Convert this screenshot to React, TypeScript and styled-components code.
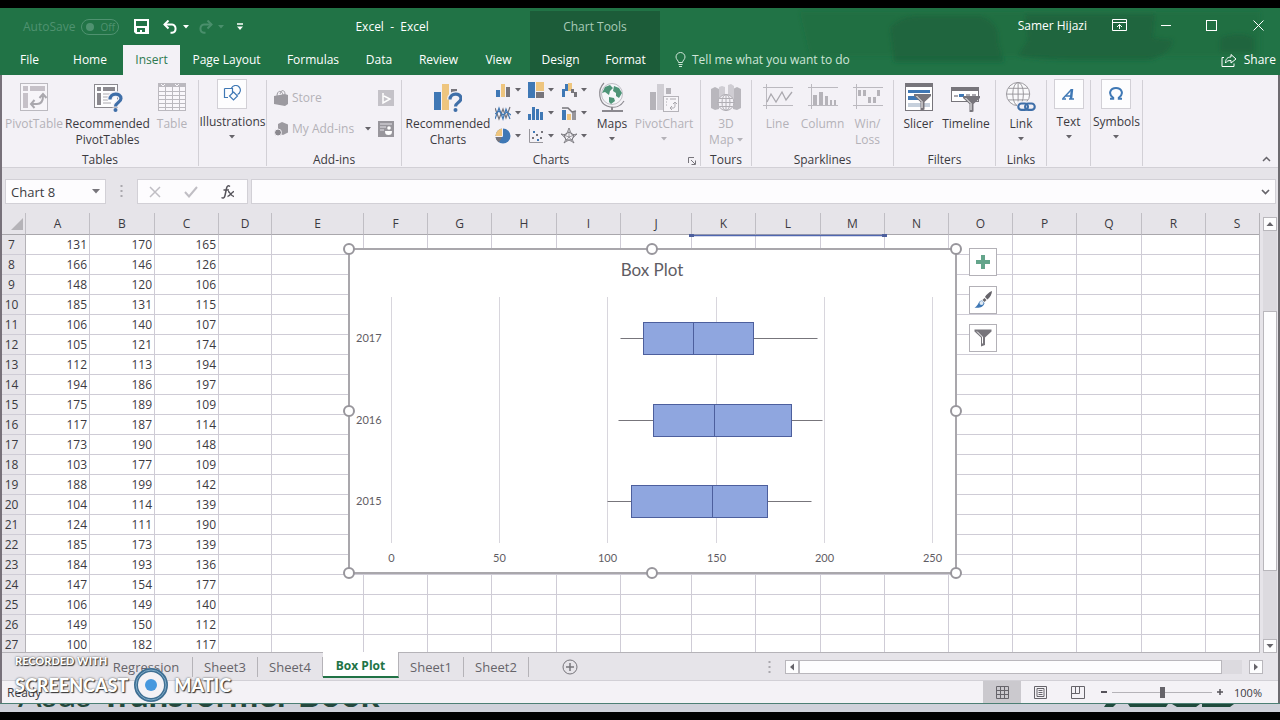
import React from "react";
import styled, { createGlobalStyle, css } from "styled-components";

const ui = `"Open Sans", "Noto Sans", sans-serif`;
const sheetFont = `Lato, "Open Sans", sans-serif`;

const color = {
  green: "#217346",
  greenDark: "#1c5c39",
  ribbon: "#f3f1f6",
  chrome: "#e6e4e9",
  line: "#d2d0d6",
  grid: "#cfccd6",
  text: "#3b3a3f",
  muted: "#b4b2b8",
  blue: "#3f78b5",
  sand: "#eec57e",
  grey: "#77757b",
};

const GlobalStyle = createGlobalStyle`
  * { box-sizing: border-box; }
  body { margin: 0; background: #000; font-family: ${ui}; font-size: 12px; color: ${color.text}; overflow: hidden; }
  button, input { font: inherit; color: inherit; margin: 0; }
  button { background: none; border: 0; padding: 0; cursor: pointer; }
  svg { display: block; flex: none; }
`;

const Screen = styled.div`
  position: relative;
  display: flex;
  flex-direction: column;
  height: 100vh;
  min-height: 420px;
  padding: 8px 0;
  background: #000;
`;

const Window = styled.main`
  flex: 1;
  min-height: 0;
  display: flex;
  flex-direction: column;
  border-left: 2px solid #77717a;
  border-right: 2px solid #6d6b70;
  background: ${color.chrome};
`;

/* Title bar and tabs */

const Header = styled.header`
  position: relative;
  display: flex;
  height: 67px;
  margin: 0 -2px;
  padding: 0 2px;
  background: ${color.green};
  color: #fff;
`;

const Doodles = styled.svg`
  position: absolute;
  right: 0;
  top: 0;
`;

const HeaderSide = styled.div<{ $grow?: boolean }>`
  position: relative;
  display: flex;
  flex-direction: column;
  flex: ${(p) => (p.$grow ? "1" : "0 0 528px")};
`;

const TitleRow = styled.div<{ $end?: boolean }>`
  display: flex;
  align-items: center;
  height: 37px;
  ${(p) => (p.$end ? "justify-content: flex-end; padding: 0 14px 3px 0;" : "padding-left: 21px;")}
`;

const AutoSave = styled.label`
  display: flex;
  align-items: center;
  gap: 6px;
  margin-right: 15px;
  color: #4f9270;
`;

const ToggleInput = styled.input`
  appearance: none;
  width: 8px;
  height: 8px;
  border-radius: 50%;
  background: #4f9270;
`;

const Toggle = styled.span`
  display: flex;
  align-items: center;
  gap: 6px;
  width: 38px;
  height: 16px;
  padding-left: 4px;
  border: 1px solid #4f9270;
  border-radius: 8px;
  font-size: 10px;
`;

const IconButton = styled.button<{ $gap?: number }>`
  display: flex;
  align-items: center;
  justify-content: center;
  margin-right: ${(p) => p.$gap ?? 0}px;
`;

const DocTitle = styled.h1`
  margin: 0 0 0 112px;
  font-size: 12px;
  font-weight: 400;
  white-space: pre;
`;

const TabRow = styled.nav`
  display: flex;
  height: 30px;
`;

const Tab = styled.button<{ $width: number; $active?: boolean }>`
  flex: 0 0 ${(p) => p.$width}px;
  padding-bottom: 1px;
  white-space: nowrap;
  ${(p) => p.$active && css`background: ${color.ribbon}; color: #2d7a50;`}
`;

const ChartTools = styled.div`
  position: relative;
  display: flex;
  flex-direction: column;
  flex: 0 0 130px;
  margin-top: 3px;
  background: ${color.greenDark};
`;

const ChartToolsTitle = styled.div`
  height: 34px;
  line-height: 32px;
  text-align: center;
  color: #a9cbb8;
`;

const TellMe = styled.button`
  display: flex;
  align-items: center;
  gap: 6px;
  margin-left: 15px;
  padding-bottom: 1px;
  color: #cfe5d8;
`;

const Share = styled.button`
  display: flex;
  align-items: center;
  gap: 7px;
  margin-left: auto;
  padding: 0 2px 1px 0;
`;

const UserName = styled.span`
  margin-right: 25px;
`;

/* Ribbon */

const Ribbon = styled.section`
  display: flex;
  height: 93px;
  padding: 5px 0 1px;
  background: ${color.ribbon};
  border-bottom: 1px solid ${color.line};
`;

const Group = styled.div<{ $width: number }>`
  display: flex;
  flex-direction: column;
  justify-content: space-between;
  flex: 0 0 ${(p) => p.$width}px;
  border-right: 1px solid ${color.line};
`;

const GroupBody = styled.div<{ $start?: boolean }>`
  display: flex;
  justify-content: ${(p) => (p.$start ? "flex-start" : "center")};
  padding-left: ${(p) => (p.$start ? "2px" : "0")};
`;

const GroupLabel = styled.div`
  display: flex;
  justify-content: center;
  line-height: 12px;
`;

const Launcher = styled.button`
  margin: 2px 4px 0 -12px;
`;

const LabelText = styled.span`
  flex: 1;
  text-align: center;
`;

const BigButton = styled.button<{ $width: number; $disabled?: boolean }>`
  display: flex;
  flex-direction: column;
  align-items: center;
  flex: 0 0 ${(p) => p.$width}px;
  padding-top: 2px;
  line-height: 16px;
  white-space: nowrap;
  color: ${(p) => (p.$disabled ? color.muted : color.text)};

  > svg:first-child { margin-bottom: 4px; }
`;

const CaretRow = styled.span`
  display: flex;
  height: 14px;
  align-items: center;
`;

const WithCaret = styled.span`
  display: flex;
  align-items: center;
  gap: 3px;
`;

const BoxButton = styled.button`
  display: flex;
  flex-direction: column;
  align-items: center;
  line-height: 16px;
`;

const IconBox = styled.span`
  display: flex;
  align-items: center;
  justify-content: center;
  width: 30px;
  height: 30px;
  margin: -1px 0 5px;
  border: 1px solid ${color.line};
  background: #fdfdfe;
`;

const AddIns = styled.div`
  display: grid;
  grid-template-columns: 104px 16px;
  grid-auto-rows: 31px;
  align-items: center;
  padding-top: 2px;
`;

const SmallButton = styled.button`
  display: flex;
  align-items: center;
  gap: 3px;
  color: ${color.muted};
`;

const ChartGrid = styled.div`
  display: grid;
  grid-template-columns: repeat(3, 33px);
  grid-auto-rows: 23px;
  margin: -2px 0 0 3px;
`;

const ChartTypeButton = styled.button`
  display: flex;
  align-items: center;
  gap: 4px;
`;

const Collapse = styled.button`
  margin: auto 7px 4px auto;
`;

/* Formula bar */

const FormulaBar = styled.section`
  display: flex;
  height: 45px;
  padding: 11px 2px 9px 3px;
`;

const Field = styled.div<{ $width?: number }>`
  display: flex;
  align-items: center;
  flex: ${(p) => (p.$width ? `0 0 ${p.$width}px` : "1")};
  min-width: 0;
  padding: 0 5px;
  border: 1px solid ${color.line};
  background: #fdfcfe;
`;

const FieldInput = styled.input`
  flex: 1;
  width: 0;
  min-width: 0;
  border: 0;
  outline: 0;
  padding: 0;
  font-size: 13px;
  background: transparent;
`;

const Dots = styled.svg`
  margin: auto 14px;
`;

const FormulaTools = styled(Field)`
  justify-content: space-between;
  padding: 0 12px 0 11px;
  margin-right: 3px;
`;

/* Sheet */

const Workspace = styled.section`
  flex: 1;
  min-height: 0;
  display: flex;
`;

const SheetPane = styled.div`
  position: relative;
  flex: 1;
  min-width: 0;
  overflow: hidden;
  border-right: 1px solid #b5b3b8;
  border-bottom: 1px solid #b5b3b8;
`;

const Grid = styled.table`
  width: calc(100% + 10px);
  table-layout: fixed;
  border-collapse: separate;
  border-spacing: 0;
  font-family: ${ui};
  font-size: 12px;
`;

const ColHead = styled.th`
  height: 22px;
  padding: 0;
  font-weight: 400;
  line-height: 21px;
  background: ${color.chrome};
  border-right: 1px solid #c0bec4;
  border-bottom: 1px solid #a9a7ac;
`;

const CornerHead = styled(ColHead)`
  > svg { margin-left: 9px; }
`;

const RowHead = styled.th`
  height: 20px;
  padding: 1px 4px 0 0;
  font-weight: 400;
  line-height: 18px;
  background: ${color.chrome};
  border-right: 1px solid #b4b2b7;
  border-bottom: 1px solid ${color.grid};
`;

const Cell = styled.td`
  height: 20px;
  padding: 1px 2px 0 0;
  line-height: 18px;
  text-align: right;
  background: #fff;
  border-right: 1px solid ${color.grid};
  border-bottom: 1px solid ${color.grid};
`;

const RangeMark = styled.svg`
  position: absolute;
  left: 687px;
  top: 21px;
`;

const ChartObject = styled.svg`
  position: absolute;
  left: 338px;
  top: 27px;
`;

const ChartSideButtons = styled.div`
  position: absolute;
  left: 967px;
  top: 35px;
  display: flex;
  flex-direction: column;
  gap: 10px;
`;

const ChartSideButton = styled.button`
  display: flex;
  align-items: center;
  justify-content: center;
  width: 28px;
  height: 28px;
  border: 1px solid #b3b1b7;
  background: #fff;
`;

const VScroll = styled.div`
  display: flex;
  flex-direction: column;
  width: 18px;
  padding: 4px 1px 0 3px;
`;

const ScrollButton = styled.button`
  display: flex;
  align-items: center;
  justify-content: center;
  flex: none;
  width: 14px;
  height: 14px;
  border: 1px solid #b9b7bc;
  background: #fdfdfe;
`;

const VTrack = styled.div`
  flex: 1;
  display: grid;
  grid-template-rows: 80fr 262fr 68fr;
  background: #dcdadf;
`;

const VThumb = styled.div`
  grid-row: 2;
  border: 1px solid #b9b7bc;
  background: #fdfdfe;
`;

/* Sheet tabs */

const SheetTabs = styled.nav`
  display: flex;
  align-items: center;
  height: 28px;
  padding-left: 98px;
  border-bottom: 1px solid ${color.line};
`;

const SheetTab = styled.button<{ $width: number; $active?: boolean }>`
  flex: 0 0 ${(p) => p.$width}px;
  height: 20px;
  border-right: 1px solid #b5b3b8;
  line-height: 18px;
  font-size: 13px;
  color: #66646a;
  white-space: nowrap;
  ${(p) =>
    p.$active &&
    css`
      align-self: flex-start;
      height: 26px;
      margin-top: -1px;
      padding-top: 4px;
      position: relative;
      background: #fff;
      border-bottom: 2px solid ${color.green};
      color: #217346;
      font-size: 12px;
      font-weight: 700;
    `}
`;

const AddSheet = styled.button`
  margin: 0 auto 0 33px;
`;

const HScroll = styled.div`
  display: flex;
  flex: 0 0 478px;
  margin-right: 15px;
`;

const HTrack = styled.div`
  flex: 1;
  display: grid;
  grid-template-columns: 420fr 20fr;
  margin-right: 7px;
  background: #dcdadf;
`;

const HThumb = styled.div`
  border: 1px solid #b9b7bc;
  background: #fdfdfe;
`;

/* Status bar */

const StatusBar = styled.footer`
  display: flex;
  align-items: center;
  height: 22px;
  padding: 0 16px 0 5px;
  background: #f4f2f6;
`;

const Views = styled.div`
  display: flex;
  align-self: stretch;
  margin-left: auto;
`;

const ViewButton = styled.button<{ $active?: boolean }>`
  display: flex;
  align-items: center;
  justify-content: center;
  width: 38px;
  background: ${(p) => (p.$active ? "#cbc9ce" : "transparent")};
`;

const ZoomSlider = styled.input`
  appearance: none;
  width: 100px;
  height: 12px;
  margin: 0 4px;
  background: linear-gradient(#b5b3b8, #b5b3b8) center / 100% 1px no-repeat;

  &::-webkit-slider-thumb {
    appearance: none;
    width: 5px;
    height: 11px;
    background: #66646a;
  }
`;

const ZoomValue = styled.span`
  width: 30px;
  margin-left: 8px;
  text-align: right;
  font-size: 11px;
`;

/* Desktop strip below the window */

const Desktop = styled.div`
  display: flex;
  justify-content: space-between;
  align-items: flex-end;
  height: 9px;
  overflow: hidden;
  padding: 0 44px 4px 18px;
  border-top: 1px solid #4c7f74;
  background: #cfd1da;
  color: #24473c;
`;

const DesktopText = styled.span`
  font-family: ${sheetFont};
  font-size: 35px;
  line-height: 30px;
  white-space: nowrap;
`;

const Watermark = styled.div`
  position: absolute;
  left: 15px;
  bottom: 17px;
  color: #fff;
  font-family: ${sheetFont};
  font-weight: 900;
  text-shadow: 1px 1px 1px #333, 0 0 2px #444;
  pointer-events: none;
`;

const WatermarkTop = styled.div`
  font-size: 11px;
  line-height: 12px;
`;

const WatermarkName = styled.div`
  display: flex;
  align-items: center;
  gap: 5px;
  font-size: 18px;
  line-height: 36px;
`;

/* Icons */

const Caret = ({ fill = "#66646a" }: { fill?: string }) => (
  <svg width="6" height="4" viewBox="0 0 6 4"><path d="M0 0h6L3 3.5z" fill={fill} /></svg>
);

const Arrow = ({ turn }: { turn: number }) => (
  <svg width="8" height="8" viewBox="0 0 8 8"><path d="M0.500 6h7L4 2z" fill="#66646a" transform={`rotate(${turn} 4 4)`} /></svg>
);

const Funnel = ({ x, y }: { x: number; y: number }) => (
  <g transform={`translate(${x} ${y})`}>
    <path d="M0 0h17v2l-6.500 6v7.500l-4 1.500V8L0 2z" fill="#77757b" />
    <path d="M2.500 2L8 7.500V14" fill="none" stroke="#fff" strokeWidth="1" />
  </g>
);

const SaveIcon = () => (
  <svg width="15" height="15" viewBox="0 0 15 15"><path fillRule="evenodd" fill="#fff" d="M0 0h15v15H2l-2-2zM2 2v5h11V2zM3 9v4h1v0h2v-2h2v2h3V9z" /></svg>
);

const UndoIcon = ({ flip, stroke }: { flip?: boolean; stroke: string }) => (
  <svg width="15" height="14" viewBox="0 0 15 14">
    <g transform={flip ? "translate(15 0) scale(-1 1)" : undefined} fill="none" stroke={stroke} strokeWidth="2">
      <path d="M1.500 4.500h7.500a4.200 4.200 0 0 1 0 8.300H7.500" /><path d="M5.500 0.500l-4 4 4 4" />
    </g>
  </svg>
);

const PivotIcon = () => (
  <svg width="30" height="30" viewBox="0 0 30 30">
    <rect x="1.500" y="1.500" width="27" height="27" fill="#f7f5f9" stroke="#bbb9bf" />
    <path d="M4 4h5v5H4zM11 4h15v5H11zM4 11h5v15H4z" fill="#c6c1c8" />
    <path d="M13 22h5c4 0 6-3 6-8" fill="none" stroke="#aaa8ae" strokeWidth="2" />
    <path d="M20.500 16l3.500-4 3.500 4M15.500 18l-3.500 4 3.500 4" fill="none" stroke="#aaa8ae" strokeWidth="2" />
  </svg>
);

const QuestionMark = () => (
  <g fill="none">
    <path d="M18 17.500c0-7 11-7 11-1 0 4-5.500 4-5.500 9" stroke="#f3f1f6" strokeWidth="6" />
    <path d="M18 17.500c0-7 11-7 11-1 0 4-5.500 4-5.500 8" stroke="#3f6fa8" strokeWidth="3.200" />
    <circle cx="23.500" cy="28" r="2" fill="#3f6fa8" />
  </g>
);

const RecPivotIcon = () => (
  <svg width="30" height="30" viewBox="1 0 30 30">
    <rect x="2.500" y="2.500" width="23" height="23" fill="#fdfdfe" stroke="#8b898f" />
    <path d="M5 5h4v4H5zM11 5h12v4H11zM5 11h4v12H5z" fill="#8b898f" />
    <path d="M11 12h7M11 15h6M11 18h5M11 21h8" stroke="#aaa8ae" />
    <QuestionMark />
  </svg>
);

const TableIcon = () => (
  <svg width="30" height="30" viewBox="0 0 30 30">
    <rect x="1.500" y="1.500" width="27" height="27" fill="#f9f7fb" stroke="#bbb9bf" />
    <path d="M1 1h28v4H1z" fill="#bbb9bf" />
    <path d="M1 9.500h28M1 13.500h28M1 17.500h28M1 21.500h28M1 25.500h28M8.500 5v24M15.500 5v24M22.500 5v24" stroke="#bbb9bf" />
    <path d="M4 2l2 2 2-2M18 2l2 2 2-2" stroke="#f9f7fb" fill="none" />
  </svg>
);

const ShapesIcon = () => (
  <svg width="18" height="18" viewBox="0 0 18 18" fill="none" stroke="#3f78b5" strokeWidth="1.200">
    <path d="M1.500 3.500h8v5M5 12.500H1.500v-9" /><path d="M8.500 3a4.700 4.700 0 1 1 6 6.500" /><path d="M10.500 7l4 4-4 4-4-4z" fill="#fdfdfe" />
  </svg>
);

const StoreIcon = () => (
  <svg width="15" height="16" viewBox="0 0 15 16">
    <path d="M0 6l11-2 3 1v9l-3 2-11-2z" fill="#9c9aa0" /><path d="M3 6c0-6 5-6 6-1M6 4c1-5 5-4 5 0" fill="none" stroke="#9c9aa0" />
  </svg>
);

const AddinIcon = () => (
  <svg width="15" height="16" viewBox="0 0 15 16">
    <path d="M8 1l6 2.500v8L9 14l-5-2V3z" fill="#9c9aa0" /><circle cx="4" cy="11.500" r="3.500" fill="#8b898f" stroke="#f3f1f6" />
  </svg>
);

const BingIcon = () => (
  <svg width="16" height="16" viewBox="0 0 16 16"><path d="M0 0h16v16H0z" fill="#c4c2c8" /><path d="M5 3v10l7-4-6-3" fill="none" stroke="#fff" strokeWidth="1.500" /></svg>
);

const PeopleIcon = () => (
  <svg width="16" height="16" viewBox="0 0 16 16"><path d="M0 0h16v16H0z" fill="#98969c" /><path d="M2 3h12M2 6h6M2 9h4" stroke="#e4e2e8" /><circle cx="11" cy="7" r="1.800" fill="#fff" /><path d="M7 10h7c0 3-1 4-3.500 4S7 13 7 10z" fill="#fff" /></svg>
);

const RecChartIcon = () => (
  <svg width="28" height="30" viewBox="2 0 28 30">
    <path d="M2 10h7v18H2z" fill={color.blue} /><path d="M10 2h7v26h-7z" fill={color.sand} /><path d="M19 7h6v4h-6z" fill={color.grey} />
    <QuestionMark />
  </svg>
);

const MapsIcon = () => (
  <svg width="28" height="30" viewBox="0 1 28 30">
    <circle cx="14" cy="13" r="10.500" fill="#f4f6f9" stroke="#c0bec5" />
    <path d="M7 6l5-2 3 3-3 3-1 4-4-3-3 1zM16 5l5 2 3 5-3 5-3-2 0-3-3-2zM11 16l5 1 1 3-4 3-2-2z" fill="#4e9478" />
    <path d="M6 2C-1 9 1 22 9 25s14 0 17-5" fill="none" stroke="#8b898f" strokeWidth="1.200" />
    <path d="M14 26v3M4 30h21" stroke="#8b898f" strokeWidth="2" />
  </svg>
);

const PivotChartIcon = () => (
  <svg width="32" height="30" viewBox="0 0 32 30">
    <path d="M2 10h6v18H2zM18 6h5v6h-5z" fill="#b5b3b9" /><path d="M9 2h7v26H9z" fill="#d0ced4" />
    <rect x="15.500" y="14.500" width="15" height="15" fill="#f7f5f9" stroke="#b5b3b9" />
    <path d="M18 17h2M22 17h6M18 20h1M18 23h1M23 26h2c2 0 2-1 2-5M25 22l2-2 2 2M24 24l-2 2 2 2" fill="none" stroke="#aaa8ae" />
  </svg>
);

const Map3DIcon = () => (
  <svg width="30" height="30" viewBox="0 0 30 30">
    <path d="M0 7l4-2 4 2v20l-4 1-4-2zM22 7l4-2 4 2v19l-4 2-4-1z" fill="#b9b7bd" /><path d="M8 5l3-1 3 1v12H8zM17 3l3-1 3 2v14h-6z" fill="#cfcdd3" />
    <circle cx="15" cy="20.500" r="8" fill="#f3f1f6" stroke="#b0aeb4" />
    <path d="M7 20.500h16M8.500 16.500h13M8.500 24.500h13M15 12.500v16" stroke="#b0aeb4" /><ellipse cx="15" cy="20.500" rx="4" ry="8" fill="none" stroke="#b0aeb4" />
  </svg>
);

const SparkIcon = ({ kind }: { kind: "line" | "column" | "winloss" }) => (
  <svg width="30" height="30" viewBox="0 0 30 30" fill="none" stroke="#bbb9bf">
    <path d="M0 5.500h30M0 23.500h30M3.500 2v25" />
    {kind === "line" && <path d="M4 20l4-8 5 8 6-10 4 8 6-8" stroke="#aaa8ae" strokeWidth="1.300" />}
    {kind === "column" && <path d="M5 13h4v10H5zM11 10h4v13h-4zM17 14h3v9h-3zM22 18h2v5h-2zM26 18h2v5h-2z" fill="#b5b3b9" stroke="none" />}
    {kind === "winloss" && <path d="M5 8h3v6H5zM10 8h3v6h-3zM15 15h3v6h-3zM20 15h3v6h-3zM24 8h3v6h-3z" fill="#b5b3b9" stroke="none" />}
  </svg>
);

const SlicerIcon = () => (
  <svg width="28" height="30" viewBox="0 0 28 30">
    <rect x="0.500" y="1.500" width="27" height="27" fill="#fff" stroke="#77757b" /><path d="M0 1h28v4H0z" fill="#77757b" />
    <path d="M3 8h22v3H3zM3 14h14v4H3z" fill={color.blue} /><path d="M3 21h22v4H3z" fill="#c6d0dc" />
    <Funnel x={9} y={12} />
  </svg>
);

const TimelineIcon = () => (
  <svg width="32" height="30" viewBox="0 0 32 30">
    <rect x="1.500" y="5.500" width="27" height="14" fill="#fff" stroke="#77757b" /><path d="M1 5h28v4H1z" fill="#77757b" />
    <path d="M4 13h4v2H4zM16 12h4v2h-4zM22 12h4v2h-4z" fill="#aaa8ae" /><path d="M9 12h5v3H9z" fill={color.blue} />
    <Funnel x={13} y={14} />
  </svg>
);

const LinkIcon = () => (
  <svg width="32" height="30" viewBox="0 1 32 31" fill="none" stroke="#98969c">
    <circle cx="13" cy="13.500" r="12" fill="#fafafc" /><ellipse cx="13" cy="13.500" rx="5.500" ry="12" /><path d="M13 1.500v24M1 13.500h24M3 7.500h20M3 19.500h20" />
    <rect x="12" y="21" width="20" height="11" fill="#f3f1f6" stroke="none" />
    <rect x="13.200" y="23.200" width="10" height="6.600" rx="3.300" stroke="#3f6fa8" strokeWidth="2.200" /><rect x="20.200" y="23.200" width="10" height="6.600" rx="3.300" stroke="#3f6fa8" strokeWidth="2.200" />
  </svg>
);

const TextArtIcon = () => (
  <svg width="14" height="14" viewBox="0 0 14 14" fill="none" stroke={color.blue}>
    <path d="M1 11.500L9.500 2.500" strokeWidth="1.500" /><path d="M10 2l-1 10" strokeWidth="2.500" /><path d="M4 9h5M0 12h4M7 12h5" strokeWidth="1.300" />
  </svg>
);

const OmegaIcon = () => (
  <svg width="16" height="16" viewBox="0 0 16 16">
    <path d="M2 12.800h3.200v-1C-0.500 7.500 2.500 2 8 2s8.500 5.500 2.800 9.800v1H14" fill="none" stroke={color.blue} strokeWidth="2" />
  </svg>
);

const chartTypeIcons = [
  { name: "Column chart", art: <><path d="M1 8h4v7H1z" fill={color.blue} /><path d="M6 2h4v13H6z" fill={color.sand} /><path d="M11 5h4v10h-4z" fill={color.grey} /></> },
  { name: "Hierarchy chart", art: <><path d="M0 0h7v16H0z" fill={color.blue} /><path d="M8 0h8v9H8z" fill={color.sand} /><path d="M8 10h8v6H8z" fill={color.grey} /></> },
  { name: "Waterfall chart", art: <><path d="M1 7h3v8H1zM4 2h3v7H4z" fill={color.blue} /><path d="M7 1h4v8H7z" fill={color.sand} /><path d="M10 7h3v3h3v5h-3v-4h-3z" fill={color.grey} /></> },
  { name: "Line chart", art: <g fill="none" strokeWidth="1.200"><path d="M0 14L4 3l4 11 3-10 4 10" stroke={color.blue} /><path d="M0 3l4 11L8 4l3 9 4-11" stroke={color.grey} /><path d="M0 9l4-3 4 4 4-3 4 3" stroke={color.blue} /></g> },
  { name: "Statistic chart", art: <path d="M0 9h3v6H0zM4 2h3v13H4zM8 4h3v11H8zM12 7h3v8h-3z" fill={color.blue} /> },
  { name: "Combo chart", art: <><path d="M1 5h4v10H1z" fill={color.blue} /><path d="M6 9h4v6H6z" fill={color.sand} /><path d="M11 7h4v8h-4z" fill="#98969c" /><path d="M1 3l6 0 4 4 4-1" stroke={color.grey} fill="none" strokeWidth="1.500" /></> },
  { name: "Pie chart", art: <><circle cx="8" cy="8" r="7.500" fill={color.blue} /><path d="M7 8V0.500A7.500 7.500 0 0 0 0.500 8z" fill={color.sand} /><path d="M7 9H0.500A7.500 7.500 0 0 0 4 14.500z" fill={color.grey} /><path d="M7.500 0v8.500H0" fill="none" stroke="#f3f1f6" /></> },
  { name: "Scatter chart", art: <><path d="M1.500 1v13.500H15" fill="none" stroke="#98969c" /><path d="M4 9h2v2H4zM8 6h2v2H8zM12 9h2v2h-2zM13 3h2v2h-2z" fill={color.grey} /><path d="M5 3h2v2H5zM9 11h2v2H9z" fill={color.blue} /></> },
  { name: "Radar chart", art: <g fill="none" stroke="#77757b"><path d="M8 4l5 3-2 5H5L3 7z" /><path d="M8 0v9M8 9L0 6M8 9l8-3M8 9l-5 6M8 9l5 6M0 6l5 1 3-7 3 7 5-1-5 5 2 4-5-3-5 3 2-4z" strokeWidth="0.700" /></g> },
];

/* Data */

const columns: [string, number?][] = [
  ["A", 64], ["B", 65], ["C", 64], ["D", 53], ["E", 92], ["F", 64], ["G", 64], ["H", 65], ["I", 64], ["J", 71],
  ["K", 64], ["L", 65], ["M", 64], ["N", 64], ["O", 64], ["P", 64], ["Q", 65], ["R", 64], ["S"],
];

const rows = [
  [131, 170, 165], [166, 146, 126], [148, 120, 106], [185, 131, 115], [106, 140, 107], [105, 121, 174], [112, 113, 194],
  [194, 186, 197], [175, 189, 109], [117, 187, 114], [173, 190, 148], [103, 177, 109], [188, 199, 142], [104, 114, 139],
  [124, 111, 190], [185, 173, 139], [184, 193, 136], [147, 154, 177], [106, 149, 140], [149, 150, 112], [100, 182, 117],
];

const boxes = [
  { year: 2017, min: 106, q1: 116.5, median: 139.7, q3: 167.2, max: 197 },
  { year: 2016, min: 105, q1: 121, median: 149.2, q3: 184.7, max: 199 },
  { year: 2015, min: 100, q1: 111, median: 148.5, q3: 173.7, max: 194 },
];

const chartX = (v: number) => Math.round(51 + v * 2.164) + 0.5;

const BoxPlot = () => (
  <ChartObject width="624" height="342" viewBox="0 0 624 342" role="img" aria-label="Box Plot" fontFamily={sheetFont} fill="#5f5d64">
    <rect x="9" y="9" width="607" height="324" fill="#fff" stroke="#a9a7ac" strokeWidth="2" />
    <text x="312" y="36" fontSize="17" textAnchor="middle">Box Plot</text>
    {[0, 50, 100, 150, 200, 250].map((v) => (
      <g key={v}>
        <path d={`M${chartX(v)} 57V303`} stroke="#d8d6dd" />
        <text x={chartX(v)} y="322" fontSize="11" textAnchor="middle">{v}</text>
      </g>
    ))}
    {boxes.map((b, i) => {
      const y = Math.round(98 + i * 81.5) + 0.5;
      return (
        <g key={b.year}>
          <text x="16" y={y + 3} fontSize="11">{b.year}</text>
          <path d={`M${chartX(b.min)} ${y}H${chartX(b.max)}`} stroke="#77757b" />
          <rect x={chartX(b.q1)} y={y - 16} width={chartX(b.q3) - chartX(b.q1)} height="32" fill="#8fa6df" stroke="#4d5f9d" />
          <path d={`M${chartX(b.median)} ${y - 16}v32`} stroke="#4d5f9d" />
        </g>
      );
    })}
    {[[9, 9], [312, 9], [616, 9], [9, 171], [616, 171], [9, 333], [312, 333], [616, 333]].map(([x, y]) => (
      <circle key={`${x}-${y}`} cx={x} cy={y} r="5" fill="#fff" stroke="#98969c" strokeWidth="2" />
    ))}
  </ChartObject>
);

export default function App() {
  return (
    <Screen>
      <GlobalStyle />
      <Window>
        <Header>
          <Doodles width="560" height="67" viewBox="0 0 560 67" aria-hidden="true">
            <defs><filter id="soft"><feGaussianBlur stdDeviation="2" /></filter></defs>
            <g fill="#1d633c" filter="url(#soft)">
              <path d="M80 4h460v44H90z" opacity="0.3" />
              <path d="M170 20q10-12 30-12h60q20 6 18 26l6 20h-110z" opacity="0.8" />
              <path d="M305 6h130l-2 24 20 2q-2 14-24 20H360q-40 0-62-4l10-16z" opacity="0.8" />
              <path d="M500 30q20-8 34 0v14h-34z" opacity="0.8" />
            </g>
          </Doodles>
          <HeaderSide>
            <TitleRow>
              <AutoSave>AutoSave<Toggle><ToggleInput type="checkbox" />Off</Toggle></AutoSave>
              <IconButton $gap={14} aria-label="Save"><SaveIcon /></IconButton>
              <IconButton $gap={5} aria-label="Undo"><UndoIcon stroke="#fff" /></IconButton>
              <IconButton $gap={9} aria-label="Undo history"><Caret fill="#fff" /></IconButton>
              <IconButton $gap={5} aria-label="Redo"><UndoIcon flip stroke="#4a8f6c" /></IconButton>
              <IconButton $gap={13} aria-label="Redo history"><Caret fill="#4a8f6c" /></IconButton>
              <IconButton aria-label="Customize toolbar">
                <svg width="6" height="8" viewBox="0 0 6 8"><path d="M0 1h6" stroke="#fff" strokeWidth="1.500" /><path d="M0 3.500h6L3 7z" fill="#fff" /></svg>
              </IconButton>
              <DocTitle>{"Excel  -  Excel"}</DocTitle>
            </TitleRow>
            <TabRow>
              <Tab $width={55}>File</Tab>
              <Tab $width={66}>Home</Tab>
              <Tab $width={57} $active>Insert</Tab>
              <Tab $width={93}>Page Layout</Tab>
              <Tab $width={80}>Formulas</Tab>
              <Tab $width={52}>Data</Tab>
              <Tab $width={67}>Review</Tab>
              <Tab $width={53}>View</Tab>
            </TabRow>
          </HeaderSide>
          <ChartTools>
            <ChartToolsTitle>Chart Tools</ChartToolsTitle>
            <TabRow>
              <Tab $width={61}>Design</Tab>
              <Tab $width={69}>Format</Tab>
            </TabRow>
          </ChartTools>
          <HeaderSide $grow>
            <TitleRow $end>
              <UserName>Samer Hijazi</UserName>
              <IconButton $gap={34} aria-label="Ribbon display options">
                <svg width="15" height="12" viewBox="0 0 15 12" fill="none" stroke="#fff"><path d="M0.500 0.500h14v11H0.500zM0.500 3.500h14M7.500 10V5.500M5 8l2.500-2.500L10 8" /></svg>
              </IconButton>
              <IconButton $gap={35} aria-label="Minimize">
                <svg width="10" height="12" viewBox="0 0 10 12"><path d="M0 6.500h10" stroke="#fff" /></svg>
              </IconButton>
              <IconButton $gap={36} aria-label="Maximize">
                <svg width="11" height="11" viewBox="0 0 11 11"><rect x="0.500" y="0.500" width="10" height="10" fill="none" stroke="#fff" /></svg>
              </IconButton>
              <IconButton aria-label="Close">
                <svg width="11" height="11" viewBox="0 0 11 11"><path d="M0.500 0.500l10 10M10.500 0.500l-10 10" stroke="#fff" /></svg>
              </IconButton>
            </TitleRow>
            <TabRow>
              <TellMe>
                <svg width="11" height="15" viewBox="0 0 11 15" fill="none" stroke="#cfe5d8"><path d="M3.500 10.500c0-2-2.500-3-2.500-5.500a4.500 4.500 0 0 1 9 0c0 2.500-2.500 3.500-2.500 5.500zM3.500 12.500h4M4 14.500h3" /></svg>
                Tell me what you want to do
              </TellMe>
              <Share>
                <svg width="16" height="14" viewBox="0 0 16 14" fill="none" stroke="#fff"><path d="M3 4.500H1v9h12v-3M4.500 10c0-4 2-6 5.500-6V1.500L15 6l-5 4V7.500c-3 0-4 .5-5.500 2.500z" /></svg>
                Share
              </Share>
            </TabRow>
          </HeaderSide>
        </Header>

        <Ribbon>
          <Group $width={197}>
            <GroupBody $start>
              <BigButton $width={60} $disabled><PivotIcon />PivotTable</BigButton>
              <BigButton $width={87}><RecPivotIcon />Recommended<span>PivotTables</span></BigButton>
              <BigButton $width={42} $disabled><TableIcon />Table</BigButton>
            </GroupBody>
            <GroupLabel>Tables</GroupLabel>
          </Group>
          <Group $width={68}>
            <GroupBody>
              <BoxButton><IconBox><ShapesIcon /></IconBox>Illustrations<CaretRow><Caret /></CaretRow></BoxButton>
            </GroupBody>
          </Group>
          <Group $width={135}>
            <GroupBody>
              <AddIns>
                <SmallButton><StoreIcon />Store</SmallButton>
                <IconButton aria-label="Bing Maps"><BingIcon /></IconButton>
                <SmallButton><AddinIcon />My Add-ins<svg width="14" height="4" viewBox="0 0 14 4"><path d="M8 0h6l-3 3.500z" fill="#66646a" /></svg></SmallButton>
                <IconButton aria-label="People Graph"><PeopleIcon /></IconButton>
              </AddIns>
            </GroupBody>
            <GroupLabel>Add-ins</GroupLabel>
          </Group>
          <Group $width={299}>
            <GroupBody>
              <BigButton $width={88}><RecChartIcon />Recommended<span>Charts</span></BigButton>
              <ChartGrid>
                {chartTypeIcons.map((c) => (
                  <ChartTypeButton key={c.name} aria-label={c.name}>
                    <svg width="16" height="16" viewBox="0 0 16 16">{c.art}</svg>
                    <Caret />
                  </ChartTypeButton>
                ))}
              </ChartGrid>
              <BigButton $width={36}><MapsIcon />Maps<CaretRow><Caret /></CaretRow></BigButton>
              <BigButton $width={68} $disabled><PivotChartIcon />PivotChart<CaretRow><Caret fill={color.muted} /></CaretRow></BigButton>
            </GroupBody>
            <GroupLabel>
              <LabelText>Charts</LabelText>
              <Launcher aria-label="Chart options">
                <svg width="8" height="8" viewBox="0 0 8 8" fill="none" stroke="#77757b"><path d="M0.500 6V0.500H6M3 3l4 4M7.500 3.500v4h-4" /></svg>
              </Launcher>
            </GroupLabel>
          </Group>
          <Group $width={50}>
            <GroupBody>
              <BigButton $width={50} $disabled><Map3DIcon />3D<WithCaret>Map<Caret fill={color.muted} /></WithCaret></BigButton>
            </GroupBody>
            <GroupLabel>Tours</GroupLabel>
          </Group>
          <Group $width={142}>
            <GroupBody>
              <BigButton $width={42} $disabled><SparkIcon kind="line" />Line</BigButton>
              <BigButton $width={48} $disabled><SparkIcon kind="column" />Column</BigButton>
              <BigButton $width={42} $disabled><SparkIcon kind="winloss" />Win/<span>Loss</span></BigButton>
            </GroupBody>
            <GroupLabel>Sparklines</GroupLabel>
          </Group>
          <Group $width={102}>
            <GroupBody>
              <BigButton $width={43}><SlicerIcon />Slicer</BigButton>
              <BigButton $width={52}><TimelineIcon />Timeline</BigButton>
            </GroupBody>
            <GroupLabel>Filters</GroupLabel>
          </Group>
          <Group $width={51}>
            <GroupBody>
              <BigButton $width={50}><LinkIcon />Link<CaretRow><Caret /></CaretRow></BigButton>
            </GroupBody>
            <GroupLabel>Links</GroupLabel>
          </Group>
          <Group $width={44}>
            <GroupBody>
              <BoxButton><IconBox><TextArtIcon /></IconBox>Text<CaretRow><Caret /></CaretRow></BoxButton>
            </GroupBody>
          </Group>
          <Group $width={52}>
            <GroupBody>
              <BoxButton><IconBox><OmegaIcon /></IconBox>Symbols<CaretRow><Caret /></CaretRow></BoxButton>
            </GroupBody>
          </Group>
          <Collapse aria-label="Collapse ribbon">
            <svg width="9" height="6" viewBox="0 0 9 6"><path d="M1 5l3.500-3.500L8 5" fill="none" stroke="#66646a" strokeWidth="1.500" /></svg>
          </Collapse>
        </Ribbon>

        <FormulaBar>
          <Field $width={101}>
            <FieldInput aria-label="Name box" defaultValue="Chart 8" />
            <svg width="8" height="5" viewBox="0 0 8 5"><path d="M0 0h8L4 4.500z" fill="#77757b" /></svg>
          </Field>
          <Dots width="3" height="13" viewBox="0 0 3 13"><path d="M1.500 0v13" stroke="#aaa8ae" strokeWidth="2" strokeDasharray="2 3" /></Dots>
          <FormulaTools $width={111}>
            <IconButton aria-label="Cancel"><svg width="12" height="12" viewBox="0 0 12 12"><path d="M1 1l10 10M11 1L1 11" stroke="#c0bec4" strokeWidth="1.500" /></svg></IconButton>
            <IconButton aria-label="Enter"><svg width="14" height="12" viewBox="0 0 14 12"><path d="M1 6l4 4.500L13 1" fill="none" stroke="#c0bec4" strokeWidth="2" /></svg></IconButton>
            <IconButton aria-label="Insert function">
              <svg width="14" height="16" viewBox="0 0 14 16" fill="none" stroke="#55535a"><path d="M9 2.500C7 1 6 2 5.500 4.500l-1.500 7C3.500 14 2 14.500 0.500 13.500M2.500 6H8" strokeWidth="1.500" /><path d="M7 7.500c2 0 3 5 6 5M13 7.500c-2 0-4 5-6.500 5" strokeWidth="1.300" /></svg>
            </IconButton>
          </FormulaTools>
          <Field>
            <FieldInput aria-label="Formula" />
            <IconButton aria-label="Expand formula bar">
              <svg width="9" height="6" viewBox="0 0 9 6"><path d="M1 1l3.500 3.500L8 1" fill="none" stroke="#66646a" strokeWidth="1.700" /></svg>
            </IconButton>
          </Field>
        </FormulaBar>

        <Workspace>
          <SheetPane>
            <Grid>
              <colgroup>
                <col width="24" />
                {columns.map(([name, width]) => <col key={name} width={width} />)}
              </colgroup>
              <thead>
                <tr>
                  <CornerHead aria-label="Select all"><svg width="12" height="12" viewBox="0 0 12 12"><path d="M12 0v12H0z" fill="#b5b3b8" /></svg></CornerHead>
                  {columns.map(([name]) => <ColHead key={name} scope="col">{name}</ColHead>)}
                </tr>
              </thead>
              <tbody>
                {rows.map((row, i) => (
                  <tr key={i}>
                    <RowHead scope="row">{i + 7}</RowHead>
                    {columns.map(([name], c) => <Cell key={name}>{row[c]}</Cell>)}
                  </tr>
                ))}
              </tbody>
            </Grid>
            <RangeMark width="200" height="4" viewBox="0 0 200 4"><path d="M5 1.500h190" stroke="#4f66b0" strokeWidth="1.500" /><path d="M0 0h5v3H0zM193 0h5v3h-5z" fill="#4d5f9d" /></RangeMark>
            <BoxPlot />
            <ChartSideButtons>
              <ChartSideButton aria-label="Chart elements"><svg width="14" height="14" viewBox="0 0 14 14"><path d="M5 0h4v5h5v4H9v5H5V9H0V5h5z" fill="#64a58b" /></svg></ChartSideButton>
              <ChartSideButton aria-label="Chart styles">
                <svg width="20" height="20" viewBox="0 0 20 20"><path d="M19 1c-3 1-6 4-7 6l2.500 2.500C17 7.500 19 4 19 1zM11.500 8L9.500 10l2 2 2-2z" fill="#66646a" /><path d="M9 10.500c-4 0-3 5-7.500 7 4 1 9 0 10-4.500z" fill={color.blue} /><circle cx="8.500" cy="13" r="2" fill="#dfe9f2" /></svg>
              </ChartSideButton>
              <ChartSideButton aria-label="Chart filters"><svg width="18" height="18" viewBox="0 0 18 18"><Funnel x={0.500} y={0.500} /></svg></ChartSideButton>
            </ChartSideButtons>
          </SheetPane>
          <VScroll>
            <ScrollButton aria-label="Scroll up"><Arrow turn={0} /></ScrollButton>
            <VTrack><VThumb /></VTrack>
            <ScrollButton aria-label="Scroll down"><Arrow turn={180} /></ScrollButton>
          </VScroll>
        </Workspace>

        <SheetTabs>
          <SheetTab $width={93}>Regression</SheetTab>
          <SheetTab $width={65}>Sheet3</SheetTab>
          <SheetTab $width={65}>Sheet4</SheetTab>
          <SheetTab $width={76} $active>Box Plot</SheetTab>
          <SheetTab $width={65}>Sheet1</SheetTab>
          <SheetTab $width={65}>Sheet2</SheetTab>
          <AddSheet aria-label="New sheet">
            <svg width="16" height="16" viewBox="0 0 16 16" fill="none" stroke="#77757b"><circle cx="8" cy="8" r="7" /><path d="M4 8h8M8 4v8" strokeWidth="1.500" /></svg>
          </AddSheet>
          <Dots width="3" height="12" viewBox="0 0 3 12"><path d="M1.500 0v12" stroke="#aaa8ae" strokeWidth="2" strokeDasharray="2 3" /></Dots>
          <HScroll>
            <ScrollButton aria-label="Scroll left"><Arrow turn={270} /></ScrollButton>
            <HTrack><HThumb /></HTrack>
            <ScrollButton aria-label="Scroll right"><Arrow turn={90} /></ScrollButton>
          </HScroll>
        </SheetTabs>

        <StatusBar>
          Ready
          <Views>
            <ViewButton $active aria-label="Normal view"><svg width="13" height="13" viewBox="0 0 13 13" fill="none" stroke="#66646a"><path d="M0.500 0.500h12v12h-12zM0.500 4.500h12M0.500 8.500h12M4.500 0.500v12M8.500 0.500v12" /></svg></ViewButton>
            <ViewButton aria-label="Page layout view"><svg width="13" height="13" viewBox="0 0 13 13" fill="none" stroke="#66646a"><path d="M0.500 0.500h12v12h-12zM3 2.500h7v8H3zM4.500 4.500h4M4.500 6.500h4M4.500 8.500h4" /></svg></ViewButton>
            <ViewButton aria-label="Page break view"><svg width="14" height="13" viewBox="0 0 14 13" fill="none" stroke="#66646a"><path d="M0.500 0.500h13v12h-13zM0.500 7.500h8v-7M4.500 0.500v7" /></svg></ViewButton>
          </Views>
          <IconButton aria-label="Zoom out"><svg width="11" height="10" viewBox="0 0 11 10"><path d="M4 5h6" stroke="#55535a" strokeWidth="2" /></svg></IconButton>
          <ZoomSlider type="range" aria-label="Zoom" min={10} max={190} defaultValue={100} />
          <IconButton aria-label="Zoom in"><svg width="8" height="8" viewBox="0 0 8 8"><path d="M1 4h6M4 1v6" stroke="#55535a" strokeWidth="1.500" /></svg></IconButton>
          <ZoomValue>100%</ZoomValue>
        </StatusBar>
      </Window>

      <Desktop aria-hidden="true">
        <DesktopText>Asus <b>Transformer Book</b></DesktopText>
        <svg width="132" height="4" viewBox="0 0 132 4"><path d="M2 0h10l-3 3H0zM24 0h40l-2 3H26zM68 0h28l-4 3H73zM98 0h32l-4 3h-28z" fill="#1f4a3c" /></svg>
      </Desktop>
      <Watermark>
        <WatermarkTop>RECORDED WITH</WatermarkTop>
        <WatermarkName>
          SCREENCAST
          <svg width="36" height="36" viewBox="0 0 36 36"><circle cx="18" cy="18" r="15" fill="#f4f2f6" stroke="#3f6f93" strokeWidth="4" /><circle cx="18" cy="18" r="15" fill="none" stroke="#7fabc9" /><circle cx="18" cy="18" r="6" fill="#4798de" /></svg>
          MATIC
        </WatermarkName>
      </Watermark>
    </Screen>
  );
}
